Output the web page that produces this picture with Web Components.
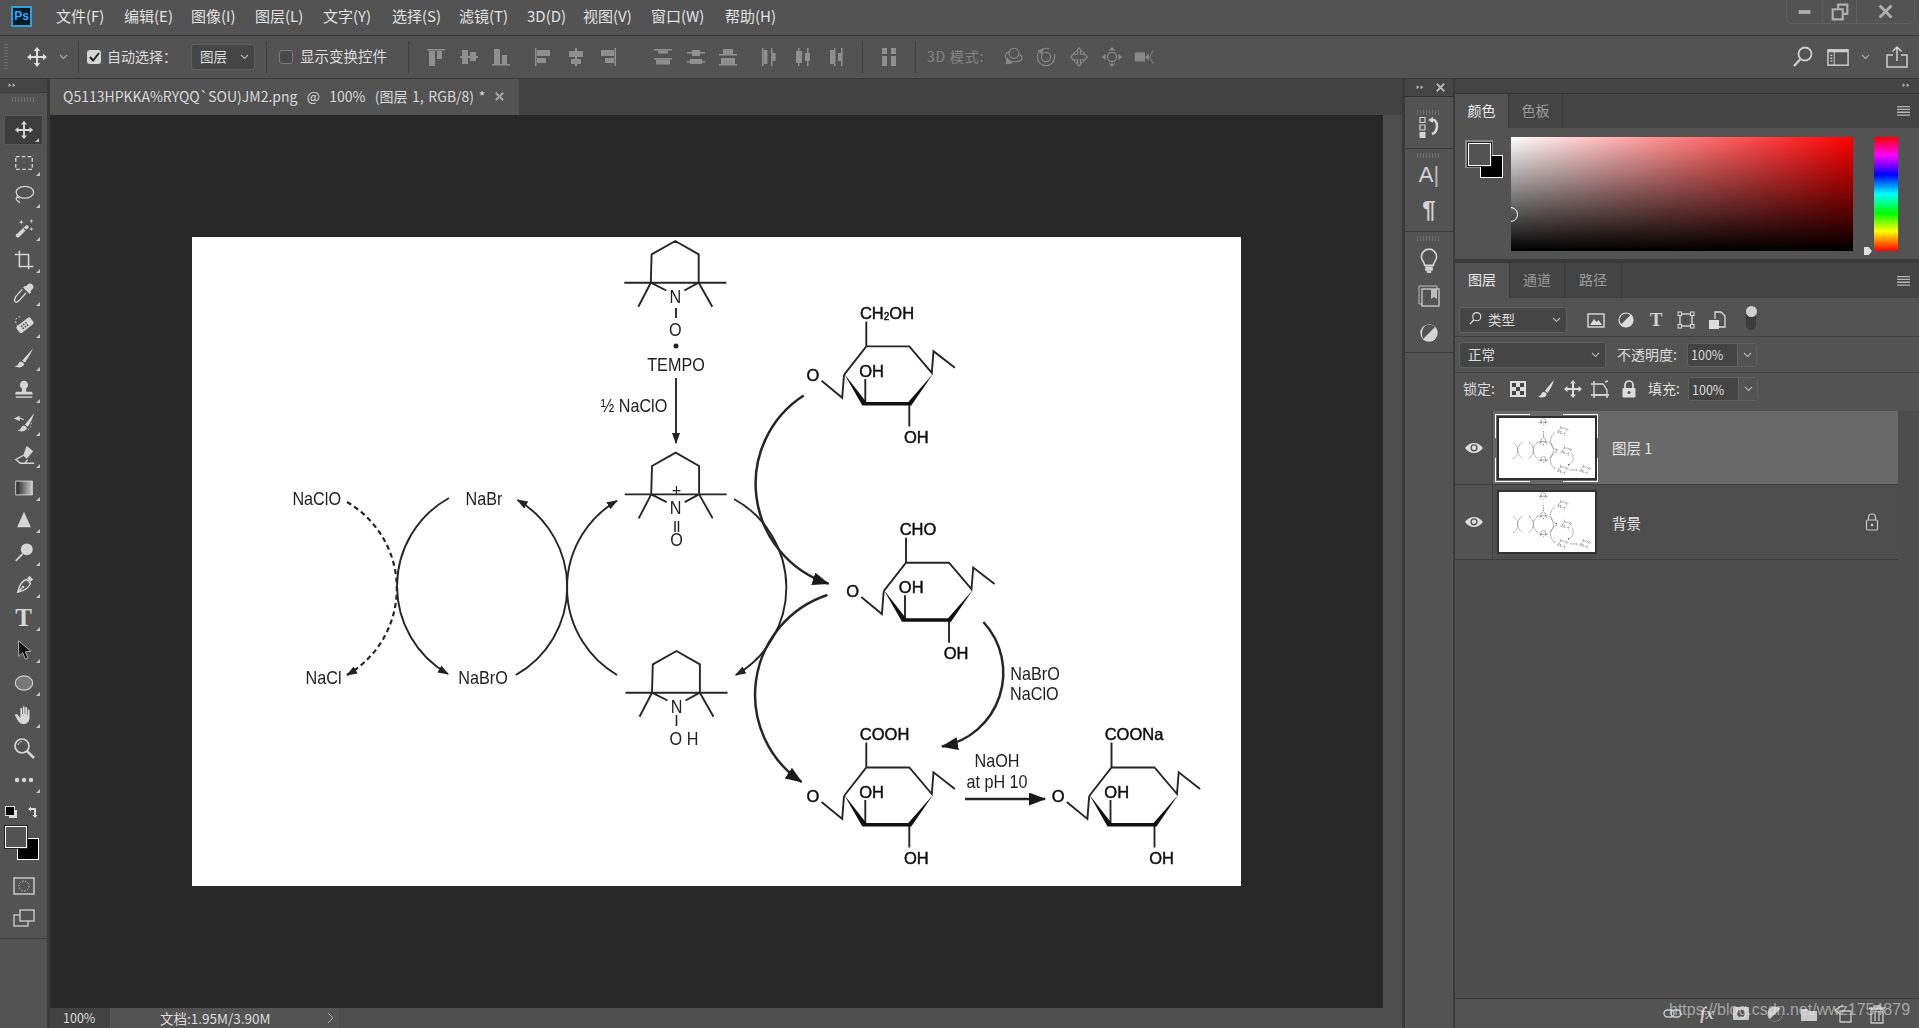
<!DOCTYPE html>
<html lang="zh"><head><meta charset="utf-8"><title>Photoshop</title>
<style>html,body{margin:0;padding:0;background:#535353;overflow:hidden}</style></head>
<body><ps-app></ps-app>
<script>
const ICONS={
move:'<path fill="currentColor" d="M12 2l3.200 4H13v5h5V8.800l4 3.200-4 3.200V13h-5v5h2.200L12 22l-3.200-4H11v-5H6v2.200L2 12l4-3.200V11h5V6H8.800z"/>',
marquee:'<rect x="3" y="5" width="18" height="14" fill="none" stroke="currentColor" stroke-width="1.500" stroke-dasharray="4 2.500"/>',
lasso:'<ellipse cx="13" cy="9" rx="9.500" ry="6.500" fill="none" stroke="currentColor" stroke-width="1.400"/><path d="M5 14c-2 1-2 3-.5 4s3 1 2.500 3M4 13l3 3" fill="none" stroke="currentColor" stroke-width="1.400"/>',
wand:'<path fill="currentColor" d="M15 8.500l2.500 2.500L6.500 22c-1 .8-2.300.3-3-.5s-.8-1.800 0-2.500z"/><path fill="#535353" d="M12.500 12l2 2-1 1-2-2z"/><path fill="currentColor" d="M9 3l.7 2 2 .7-2 .7L9 8.400l-.7-2-2-.7 2-.7zM20 2l.6 1.800 1.800.6-1.800.6-.6 1.800-.6-1.800-1.800-.6 1.800-.6zM20 11l.6 1.600 1.600.6-1.600.6-.6 1.600-.6-1.600-1.600-.6 1.600-.6z"/>',
crop:'<path fill="none" stroke="currentColor" stroke-width="1.700" d="M7 2v17h15M2 6h15v13M17 22v-2"/>',
dropper:'<path fill="currentColor" d="M17 2c2-1 4 0 5 2s0 3-1 4l-2 2 1 1-2 2-7-7 2-2 1 1z"/><path fill="none" stroke="currentColor" stroke-width="1.500" d="M10 8l-7 8c-1 2-2 3-1 5s3 1 5-1l7-8"/>',
heal:'<g transform="rotate(-38 13 13)"><rect x="4" y="8" width="19" height="9" rx="2" fill="currentColor"/><g fill="#535353"><circle cx="10" cy="11" r="1"/><circle cx="13" cy="11" r="1"/><circle cx="16" cy="11" r="1"/><circle cx="10" cy="14" r="1"/><circle cx="13" cy="14" r="1"/><circle cx="16" cy="14" r="1"/></g></g><path fill="none" stroke="currentColor" stroke-dasharray="2 2" d="M8 3C3 3 1 8 5 13"/>',
brush:'<path fill="currentColor" d="M22 1c-3 4-9 10-12 14l3 2c3-4 7-11 9-16zM9 16c-3 0-3 2-4 4l-3 1c3 2 8 2 10-2 .3-1-.5-2.300-3-3z"/>',
stamp:'<circle cx="12" cy="6.500" r="4.500" fill="currentColor"/><path fill="currentColor" d="M10 10h4l.5 4H20c1 0 1.500 1 1.500 3H2.500c0-2 .5-3 1.500-3h5.500z"/><rect x="3" y="19" width="18" height="1.500" fill="currentColor"/>',
history:'<path fill="currentColor" d="M23 1c-3 4-7 9-10 13l3 2c3-4 6-10 7-15zM12 15c-3 0-3 2-4 4l-3 1c3 2 8 2 10-2 .3-1-.5-2.300-3-3z"/><path fill="currentColor" d="M1 7l6-3 .2 2.200c2 0 3.500.5 4.800 1.800l-1 1c-1-.8-2.300-1.300-3.700-1.300L7.500 10z"/><path fill="none" stroke="currentColor" stroke-dasharray="1.500 2" d="M20 12c0 4-2 7-5 8"/>',
eraser:'<path fill="currentColor" d="M15 2l7 6-7 8-4-3.500z"/><path fill="none" stroke="currentColor" stroke-width="1.400" d="M11 12.500L3 17l5 4h5l3-4M8 21h15"/>',
gradient:'<defs><linearGradient id="g"><stop offset="0" stop-color="#222"/><stop offset="1" stop-color="#ccc"/></linearGradient></defs><rect x="3" y="4.500" width="18" height="15" fill="url(#g)" stroke="#ddd" stroke-width="1"/>',
triangle:'<path fill="currentColor" d="M12 3l7.500 17h-15z"/>',
dodge:'<circle cx="15" cy="8" r="6.500" fill="currentColor"/><path stroke="currentColor" stroke-width="2" d="M10.500 13L3 20.500"/>',
pen:'<path fill="none" stroke="currentColor" stroke-width="1.500" d="M15 6l4 4c-1 5-6 8-14 10 2-8 5-13 10-14zM5 20l5-5"/><circle cx="11" cy="14" r="1.300" fill="currentColor"/><path fill="currentColor" d="M15.500 5l2.500-3 4 4-3 2.500z"/>',
arrow:'<path fill="#111" stroke="#bbb" d="M6 2l.3 17 4.200-4 3 7 3-1.300-3-6.700 6-.6z"/>',
ellipse:'<ellipse cx="12" cy="12" rx="9.500" ry="7.800" fill="#777" stroke="#ccc" stroke-width="1.300"/>',
hand:'<path fill="currentColor" d="M8 5.500c0-1.500 2-1.500 2 0V11h.7V3.500c0-1.500 2-1.500 2 0V11h.7V4.500c0-1.500 2-1.500 2 0V12h.6V7c0-1.500 2-1.500 2 0v8c0 4-2.500 7-6.500 7-3.500 0-5-2-6.500-4.500L2.500 13c-1-1.500.8-3 2-1.700L8 15z"/>',
zoom:'<circle cx="10" cy="10" r="7" fill="none" stroke="currentColor" stroke-width="1.700"/><path stroke="currentColor" stroke-width="2.500" d="M15 15l7 7"/><path fill="none" stroke="currentColor" d="M6 9c.5-2 2-3.500 4-3.500"/>',
dots:'<g fill="currentColor"><circle cx="5" cy="12" r="2.200"/><circle cx="12" cy="12" r="2.200"/><circle cx="19" cy="12" r="2.200"/></g>',
quickmask:'<rect x="2" y="4" width="20" height="16" fill="none" stroke="currentColor" stroke-width="1.500"/><circle cx="12" cy="12" r="5" fill="none" stroke="currentColor" stroke-dasharray="1.500 1.500"/>',
screen:'<rect x="2" y="9" width="14" height="11" fill="#535353" stroke="currentColor" stroke-width="1.400"/><rect x="8" y="4" width="14" height="11" fill="#535353" stroke="currentColor" stroke-width="1.400"/>',
search:'<circle cx="14" cy="9" r="6.500" fill="none" stroke="currentColor" stroke-width="1.800"/><path stroke="currentColor" stroke-width="2.200" d="M9.500 14L3 21"/>',
workspace:'<rect x="1" y="4" width="21" height="16" fill="none" stroke="currentColor" stroke-width="1.500"/><rect x="1" y="4" width="21" height="2.500" fill="currentColor"/><path fill="currentColor" d="M3.500 9h2v1.500h-2zM3.500 12h2v1.500h-2zM3.500 15h2v1.500h-2z"/><path stroke="currentColor" d="M7.500 6v14"/>',
share:'<path fill="none" stroke="currentColor" stroke-width="1.500" d="M8 10H2v12h20V10h-6M12 16V2M7.500 6.500L12 2l4.500 4.500"/>',
min:'<rect x="5" y="10" width="13" height="4" fill="currentColor"/>',
restore:'<path fill="none" stroke="currentColor" stroke-width="2.300" d="M10 8V4h10v10h-4M4 9h11v11H4z"/>',
close:'<path stroke="currentColor" stroke-width="3" d="M5 5l13 13M18 5L5 18"/>',
fold:'<path fill="currentColor" d="M1 2l4 3-4 3zM7 2l4 3-4 3z"/>',
x:'<path stroke="currentColor" stroke-width="2.400" d="M1 1l10 10M11 1L1 11"/>',
menu:'<path fill="currentColor" d="M0 0h13v1.300H0zM0 2.800h13v1.300H0zM0 5.600h13v1.300H0zM0 8.400h13v1.300H0z"/>',
chev:'<path fill="none" stroke="currentColor" stroke-width="1.100" d="M1 1l3.500 3.500L8 1"/>',
histpanel:'<path fill="none" stroke="currentColor" stroke-width="1.200" d="M3 2.500h5v5H3zM3 10h5v5H3z"/><rect x="2.500" y="17" width="6" height="6" fill="currentColor"/><path fill="none" stroke="currentColor" stroke-width="2.600" d="M14 5c4-1 6 2 6 6s-2 7-5 8"/><path fill="currentColor" d="M11 5l5-3v6z"/>',
bulb:'<path fill="none" stroke="currentColor" stroke-width="1.500" d="M8 16c0-3-3-4-3-8a7 7 0 0 1 14 0c0 4-3 5-3 8z"/><rect x="8.500" y="17" width="7" height="4" fill="currentColor"/><rect x="10" y="21" width="4" height="2" fill="currentColor"/>',
libraries:'<rect x="5" y="5" width="17" height="17" fill="none" stroke="currentColor" stroke-width="1.500"/><path fill="none" stroke="currentColor" d="M5 20H2V2h18v3"/><path fill="currentColor" d="M14 5h6v10l-3-2-3 2z"/>',
half:'<circle cx="12" cy="12" r="9.500" fill="currentColor"/><path fill="#535353" d="M5.500 18.500L18.500 5.500c-3-3-8-3.500-11-1s-4 9-2 14z"/>',
f_image:'<rect x="2" y="4" width="16" height="13" fill="none" stroke="currentColor" stroke-width="1.400"/><path fill="currentColor" d="M4 15l4-6 2.500 3 2-2 3.500 5z"/>',
f_adjust:'<circle cx="10" cy="10" r="7" fill="none" stroke="currentColor" stroke-width="1.200"/><path fill="currentColor" d="M4.500 15L15 4.500A7 7 0 0 1 4.500 15z"/>',
f_shape:'<rect x="4" y="4" width="12" height="12" fill="none" stroke="currentColor" stroke-width="1.300"/><g fill="#535353" stroke="currentColor"><rect x="2" y="2" width="3.500" height="3.500"/><rect x="14.500" y="2" width="3.500" height="3.500"/><rect x="2" y="14.500" width="3.500" height="3.500"/><rect x="14.500" y="14.500" width="3.500" height="3.500"/></g>',
f_smart:'<path fill="none" stroke="currentColor" stroke-width="1.300" d="M8 9V2h6l4 4v11h-6"/><rect x="2" y="10" width="10" height="9" fill="currentColor"/>',
checker:'<path fill="#ddd" d="M2 2h16v16H2z"/><path fill="#444" d="M4 4h4v4H4zM12 4h4v4h-4zM8 8h4v4H8zM4 12h4v4H4zM12 12h4v4h-4z"/>',
l_brush:'<path fill="currentColor" d="M18 1c-3 3-7 8-9 11l2.500 2c2.500-3 5-8 6.500-13zM8 13c-2.500 0-2.500 2-3 3l-3 1.500c3 1.500 7 1.500 8.500-1.500.3-1-.3-2.500-2.500-3z"/>',
l_move:'<path fill="currentColor" d="M10 1l3 3.500h-2V9h4.500V7l3.500 3-3.500 3v-2H11v4.500h2L10 19l-3-3.500h2V11H4.500v2L1 10l3.500-3v2H9V4.500H7z"/>',
l_art:'<path fill="none" stroke="currentColor" stroke-width="1.300" d="M4 5h9l4 6v5H4z"/><path stroke="currentColor" stroke-width="1.500" d="M1 5h3M15 3l3-1M1 16h18M4 2v2M4 17v2M17 17v2"/>',
l_lock:'<path fill="none" stroke="currentColor" stroke-width="1.700" d="M6 9V6a4 4 0 0 1 8 0v3"/><rect x="3.500" y="9" width="13" height="9.500" rx="1" fill="currentColor"/><circle cx="10" cy="13.500" r="1.500" fill="#535353"/>',
lock_o:'<path fill="none" stroke="currentColor" stroke-width="1.200" d="M6.500 8V5.500a3.500 3.500 0 0 1 7 0V8"/><rect x="4.500" y="8" width="11" height="10" rx="1" fill="none" stroke="currentColor" stroke-width="1.200"/><circle cx="10" cy="13" r="1.300" fill="currentColor"/>',
eye:'<path fill="currentColor" d="M1 10c2.500-3.500 5.500-5 9-5s6.500 1.500 9 5c-2.500 3.500-5.500 5-9 5s-6.500-1.500-9-5z"/><circle cx="10" cy="9.800" r="3.600" fill="#535353"/><circle cx="10" cy="9.800" r="2.200" fill="currentColor"/>',
b_link:'<g fill="none" stroke="currentColor" stroke-width="1.400"><rect x="1" y="6" width="10" height="7" rx="3.500"/><rect x="8" y="6" width="10" height="7" rx="3.500"/></g>',
b_mask:'<rect x="2" y="3" width="16" height="13" rx="1" fill="currentColor"/><circle cx="10" cy="9.500" r="3.800" fill="#535353"/>',
b_adj:'<circle cx="10" cy="10" r="7.500" fill="currentColor"/><path fill="#535353" d="M4.700 15.300L15.300 4.700A7.500 7.500 0 0 1 4.700 15.300z"/>',
b_folder:'<path fill="currentColor" d="M2 5h6l2 2h8v10H2z"/>',
b_new:'<path fill="none" stroke="currentColor" stroke-width="1.300" d="M7 7h11v11H7zM7 10L2 6l8-5"/>',
b_trash:'<path fill="none" stroke="currentColor" stroke-width="1.300" d="M4 5h12v14H4zM2 4h16M7 4V2h6v2M8 7v10M12 7v10"/>',
orbit:'<circle cx="13" cy="8" r="5.500" fill="none" stroke="currentColor" stroke-width="1.200"/><path fill="none" stroke="currentColor" stroke-width="1.200" d="M8 6c-5 2-6 6-2 9 4 3 12 3 15 0 2-3 0-5-3-6"/><path fill="currentColor" d="M5 12l7 7-8 1z"/>',
roll:'<circle cx="12" cy="12" r="9.500" fill="none" stroke="currentColor" stroke-width="1.200" stroke-dasharray="48 8"/><circle cx="12" cy="12" r="5" fill="none" stroke="currentColor" stroke-width="1.200"/><path fill="currentColor" d="M3 5l7-2-3 6z"/>',
pan:'<path fill="none" stroke="currentColor" stroke-width="1.300" d="M12 2l3 3.500h-1.500V9H17V7.500l4 4.500-4 4.500V15h-3.500v3.500H15L12 22l-3-3.500h1.500V15H7v1.500L3 12l4-4.500V9h3.500V5.500H9z"/>',
slide:'<circle cx="12" cy="12" r="5" fill="none" stroke="currentColor" stroke-width="1.300"/><path fill="currentColor" d="M12 1l3.500 4h-7zM12 23l-3.500-4h7zM1 12l4-3.500v7zM23 12l-4 3.500v-7z"/>',
camera:'<rect x="1" y="7" width="11" height="10" rx="1" fill="currentColor"/><path fill="currentColor" d="M12 12l4-4v8z"/><path fill="none" stroke="currentColor" d="M21 5l-4 7 4 7"/>'
};
const R=(x,y,w,h)=>`<rect x="${x}" y="${y}" width="${w}" height="${h}" fill="currentColor"/>`;
Object.assign(ICONS,{
a1:R(1,2,18,1.500)+R(3,4,6,15)+R(11,4,5,8),
a2:R(1,9,2,2)+R(3,3,6,14)+R(11,5,6,9)+R(9,9,2,2)+R(17,9,2,2),
a3:R(1,17,18,1.500)+R(3,2,6,15)+R(11,8,5,9),
a4:R(2,1,1.500,18)+R(4,3,13,6)+R(4,11,9,5),
a5:R(9,1,2,18)+R(3,4,14,6)+R(5,12,10,5),
a6:R(16.500,1,1.500,18)+R(3,3,13,6)+R(7,11,9,5),
d1:R(2,2,18,1.500)+R(6,3.500,10,3)+R(2,11,18,1.500)+R(4,12.500,14,5),
d2:R(2,5,18,1.500)+R(7,3,8,6)+R(2,14,18,1.500)+R(5,12,12,5),
d3:R(6,2,10,5)+R(2,7,18,1.500)+R(4,11,14,6)+R(2,17,18,1.500),
d4:R(2,1,1.500,18)+R(3.500,3,4,14)+R(11,1,1.500,18)+R(12.500,6,3,8),
d5:R(5,1,1.500,18)+R(3,4,6,12)+R(14,1,1.500,18)+R(12,6,5,8),
d6:R(5,3,4,14)+R(9,1,1.500,18)+R(13,6,3,8)+R(16,1,1.500,18),
dist:R(3,1,5,6)+R(12,1,5,6)+R(3,9,5,10)+R(12,9,5,10)
});
function define(name,render){customElements.define(name,class extends HTMLElement{
  connectedCallback(){ if(this.shadowRoot) return; this.attachShadow({mode:'open'}).innerHTML=render(this); }
});}
define('ps-icon',e=>{const n=e.getAttribute('name'),s=+(e.getAttribute('size')||24),v=e.getAttribute('vb')||'24';
 return `<style>:host{display:inline-flex;flex:none;line-height:0}svg{display:block}</style><svg width="${s}" height="${e.getAttribute('h')||s}" viewBox="0 0 ${v} ${e.getAttribute('vh')||v}">${ICONS[n]||''}</svg>`;});

define('ps-menubar',()=>{
 const items=[['文件(F)',68],['编辑(E)',67],['图像(I)',64],['图层(L)',68],['文字(Y)',69],['选择(S)',67],['滤镜(T)',68],['3D(D)',56],['视图(V)',68],['窗口(W)',74],['帮助(H)',60]];
 return `<style>:host{display:flex;height:35px;border-bottom:1px solid #3a3a3a;background:#535353;align-items:center;color:#e2e2e2;font-size:15px;flex:none}
 .logo{width:17px;height:17px;margin-left:11px;margin-right:24px;margin-top:-3px;border:2px solid #2fa0d8;background:#001b26;color:#31a8ff;font:bold 12px/17px "Liberation Sans",sans-serif;text-align:center;flex:none}
 .m{flex:none;white-space:nowrap;padding-bottom:4px}
 .win{margin-left:auto;margin-right:4px;align-self:flex-start;display:flex;height:23px;border:1px solid #606060;border-top:0;border-radius:0 0 6px 6px;color:#b0b0b0}
 .win div{display:flex;align-items:center;justify-content:center;border-left:1px solid #606060}.win div:first-child{border:0}</style>
 <div class="logo">Ps</div>${items.map(([t,w])=>`<div class="m" style="width:${w}px">${t}</div>`).join('')}
 <div class="win"><div style="width:35px"><ps-icon name="min" size="22"></ps-icon></div><div style="width:33px"><ps-icon name="restore" size="22"></ps-icon></div><div style="width:57px"><ps-icon name="close" size="22"></ps-icon></div></div>`;});

define('ps-select',e=>`<style>:host{display:flex;box-sizing:border-box;align-items:center;justify-content:space-between;background:#454545;border:1px solid #5f5f5f;border-radius:3px;padding:0 5px 0 8px;color:#dcdcdc;font-size:13.500px;flex:none}span{display:flex;align-items:center;gap:5px;padding-bottom:2px}ps-icon{color:#b5b5b5}</style><span><slot></slot></span><ps-icon name="chev" size="9" h="6" vb="9" vh="6"></ps-icon>`);
define('ps-percent',e=>`<style>:host{display:flex;box-sizing:border-box;height:24px;width:70px;background:#444;border:1px solid #5f5f5f;border-radius:3px;color:#dcdcdc;font:12.500px "Noto Sans CJK SC",sans-serif;align-items:center;flex:none}b{font-weight:400;width:49px;padding-left:3px;box-sizing:border-box}i{flex:1;height:100%;border-left:1px solid #666;background:#535353;display:flex;align-items:center;justify-content:center;border-radius:0 3px 3px 0;color:#b5b5b5}</style><b><slot></slot></b><i><ps-icon name="chev" size="9" h="6" vb="9" vh="6"></ps-icon></i>`);

define('ps-optionsbar',()=>{
 const cell=(n,w=33)=>`<div class="c" style="width:${w}px"><ps-icon name="${n}" size="20" vb="20"></ps-icon></div>`;
 const i3=(n)=>`<div class="c d3" style="width:33px"><ps-icon name="${n}" size="22"></ps-icon></div>`;
 return `<style>:host{display:flex;height:42px;background:#535353;border-bottom:1px solid #3a3a3a;align-items:center;color:#dcdcdc;font-size:14.500px;flex:none;position:relative}
 .c{display:flex;justify-content:center;flex:none;color:#8f8f8f}.d3{color:#8a8a8a}.s{width:1px;height:32px;background:#3e3e3e;flex:none}
 .grip{width:4px;height:26px;margin-left:4px;background:repeating-linear-gradient(#6a6a6a 0 1px,transparent 1px 3px);flex:none}
 .ck{width:14px;height:14px;border-radius:3px;background:#d6d6d6;flex:none;display:flex;align-items:center;justify-content:center}
 .uk{width:12px;height:12px;border-radius:3px;border:1px solid #7a7a7a;background:#4a4a4a;flex:none}
 .t{white-space:nowrap;flex:none;padding-bottom:3px}</style>
 <div class="grip"></div>
 <ps-icon name="move" style="margin-left:17px;color:#ddd"></ps-icon>
 <ps-icon name="chev" size="9" h="6" vb="9" vh="6" style="margin-left:10px;color:#a8a8a8"></ps-icon>
 <div class="s" style="margin-left:10px"></div>
 <div class="ck" style="margin-left:8px"><svg width="11" height="10" viewBox="0 0 11 10"><path d="M1 5l3 3.500L10 1" fill="none" stroke="#222" stroke-width="2"/></svg></div>
 <div class="t" style="margin-left:6px;width:84px;font-size:14px">自动选择：</div>
 <ps-select style="width:64px;height:26px">图层</ps-select>
 <div class="s" style="margin-left:11px"></div>
 <div class="uk" style="margin-left:12px"></div>
 <div class="t" style="margin-left:7px;width:108px">显示变换控件</div>
 <div class="s"></div>
 <div style="width:10px;flex:none"></div>${cell('a1')}${cell('a2')}${cell('a3',32)}
 <div style="width:9px;flex:none"></div>${cell('a4')}${cell('a5')}${cell('a6',32)}
 <div style="width:21px;flex:none"></div>${cell('d1')}${cell('d2')}${cell('d3',32)}
 <div style="width:10px;flex:none"></div>${cell('d4')}${cell('d5')}${cell('d6',32)}
 <div style="width:11px;flex:none"></div><div class="s"></div>
 <div style="width:12px;flex:none"></div>${cell('dist',27)}<div style="width:13px;flex:none"></div><div class="s"></div>
 <div class="t" style="margin-left:11px;color:#858585;width:69px;font-size:14px;letter-spacing:.8px">3D 模式:</div>
 ${i3('orbit')}${i3('roll')}${i3('pan')}${i3('slide')}${i3('camera')}
 <div style="margin-left:auto;display:flex;align-items:center;margin-right:10px;color:#cfcfcf">
 <ps-icon name="search" size="24" style="margin-right:12px"></ps-icon><ps-icon name="workspace" size="23" style="margin-right:11px"></ps-icon>
 <ps-icon name="chev" size="9" h="6" vb="9" vh="6" style="margin-right:15px;color:#a8a8a8"></ps-icon><ps-icon name="share" size="24"></ps-icon></div>`;});

define('ps-tool',e=>{const a=e.hasAttribute('active'),c=e.hasAttribute('nocorner');return `<style>:host{display:flex;height:32.500px;align-items:center;justify-content:center;position:relative;flex:none;color:#d6d6d6;box-sizing:border-box}
 .box{width:39px;height:30px;display:flex;align-items:center;justify-content:center;position:relative;box-sizing:border-box;${a?'background:#3d3d3d;border:1px solid #5a5a5a;border-radius:2px;':''}}
 .tr{position:absolute;right:3px;bottom:2px;width:0;height:0;border-left:4px solid transparent;border-bottom:4px solid #c8c8c8}</style>
 <div class="box"><slot></slot>${c?'':'<i class="tr"></i>'}</div>`;});

define('ps-toolbar',()=>{
 const names=['move','marquee','lasso','wand','crop','dropper','heal','brush','stamp','history','eraser','gradient','triangle','dodge','pen','T','arrow','ellipse','hand','zoom','dots'];
 return `<style>:host{display:flex;flex-direction:column;width:50px;box-sizing:border-box;border-right:3px solid #3a3a3a;background:#535353;flex:none}
 .h{height:14px;background:#454545;border-bottom:1px solid #383838;color:#b0b0b0;padding:3px 0 0 8px;box-sizing:border-box;line-height:0;flex:none}
 .grip{height:5px;margin:4px auto 12px;width:24px;flex:none;background:repeating-linear-gradient(90deg,#6f6f6f 0 1px,transparent 1px 3px)}
 .t{font:700 25px/24px "Liberation Serif",serif;color:#d6d6d6;height:24px}
 .sw{height:60px;position:relative;flex:none;margin-top:8px}
 .sw>*{position:absolute}
 .fg{left:5px;top:21px;width:20px;height:20px;background:#535353;border:1px solid #fff;outline:1px solid #222;z-index:1}
 .bg{left:17px;top:33px;width:20px;height:20px;background:#000;border:1px solid #fff}
 .end{margin-top:auto;height:92px;border-top:1px solid #3d3d3d;flex:none}
 .mini{left:5px;top:1px;width:8px;height:8px;background:#000;border:1px solid #ddd}.mini2{left:9px;top:5px;width:8px;height:8px;background:#ddd}
 .sp{left:27px;top:1px;color:#ddd}
 .q{display:flex;justify-content:center;color:#c8c8c8;height:32px;align-items:center;flex:none}</style>
 <div class="h"><ps-icon name="fold" size="8" vb="12"></ps-icon></div><div class="grip"></div>
 ${names.map((n,i)=>`<ps-tool ${i==0?'active':''} ${n=='zoom'?'nocorner':''}>${n=='T'?'<span class="t">T</span>':`<ps-icon name="${n}" size="${n=='zoom'||n=='dots'?24:22}"></ps-icon>`}</ps-tool>`).join('')}
 <div class="sw"><i class="mini2"></i><i class="mini"></i>
  <svg class="sp" width="12" height="13" viewBox="0 0 12 13"><path d="M1 3l3-2.500V2h5v7h1.500L8 12 5.500 9H7V4H4v1.500z" fill="#ddd"/></svg>
  <i class="bg"></i><i class="fg"></i></div>
 <div class="q" style="margin-top:5px"><ps-icon name="quickmask" size="24"></ps-icon></div>
 <div class="q"><ps-icon name="screen" size="24"></ps-icon></div>
 <div class="end" style="margin-top:4px"></div>`;});

function diagram(mini){
 const L=(x1,y1,x2,y2,w=1.600)=>`<line x1="${x1}" y1="${y1}" x2="${x2}" y2="${y2}" stroke-width="${w}"/>`;
 const T=(x,y,s,b)=>mini?'':(b?`<text x="${x}" y="${y}" class="b">${s}</text>`:`<text transform="translate(${x} ${y}) scale(.9 1)">${s}</text>`);
 const ring=(x,y,lab)=>`<g transform="translate(${x} ${y})"><path class="p" d="M-24.500 41.700L-23.700 13.300 0 0 23.400 13.300 23.400 41.700M-24.500 41.700L-9 49.500M23.400 41.700L9 49.500M-51 41.700H51M-24.500 41.700L-37 65.700M23.400 41.700L37 65.700"/>${T(0,56,'N')}</g>`;
 const sugar=(x,y,top,tx)=>`<g transform="translate(${x} ${y})"><path class="p" d="M-22.300 28.500L0 0H43L65.500 26.500L67.200 4.800L88.600 21.400M-22.300 28.500L-24.100 51.400L-44.700 34.400M0 0V-25M-1 32.500V57M43 57V80"/>
 <path class="w" d="M-22.300 27L-4 59H45L67 27 42 55.500H0z"/>${T(-53.300,28.600,'O',1)}${T(5.200,24.600,'OH',1)}${T(50,90.200,'OH',1)}${T(tx,-33.400,top,1)}</g>`;
 return `<defs><marker id="a" markerUnits="userSpaceOnUse" markerWidth="11" markerHeight="8" refX="10" refY="4" orient="auto"><path d="M0 0L11 4 0 8z" fill="#222" stroke="none"/></marker>
 <marker id="A" markerUnits="userSpaceOnUse" markerWidth="17" markerHeight="13" refX="16" refY="6.500" orient="auto"><path d="M0 0L17 6.500 0 13z" fill="#1a1a1a" stroke="none"/></marker></defs>
 ${ring(675.300,241)}${ring(675.700,452.700)}${ring(676.500,651)}
 <path class="p" d="M676 308V318"/>
 <path class="p" d="M676 378V443" marker-end="url(#a)"/>
 ${L(675,521,675,532,1.500)}${L(678.500,521,678.500,532,1.500)}${L(676.500,715,676.500,726,1.600)}
 <circle cx="676" cy="346" r="2.500" fill="#222"/>
 ${T(675.300,330,'O')}${T(676,365,'TEMPO')}${T(634,406,'½ NaClO')}${T(676.500,491,'+')}${T(676.500,540.700,'O')}${T(684,739,'O H')}
 ${T(316.700,499.300,'NaClO')}${T(484,499.300,'NaBr')}${T(323.600,678.300,'NaCl')}${T(483,678.300,'NaBrO')}
 <path class="p" stroke-dasharray="5 3.500" style="stroke-width:${mini?7:2.200}px" d="M347 502A100 100 0 0 1 347 675" marker-end="url(#a)"/>
 <path class="p" d="M449 498A101 101 0 0 0 448 674" marker-end="url(#a)"/>
 <path class="p" d="M515.700 675A101 101 0 0 0 517.600 500" marker-end="url(#a)"/>
 <path class="p" d="M617 675A101 101 0 0 1 617 500.700" marker-end="url(#a)"/>
 <path class="p" d="M734 499A101 101 0 0 1 735.800 675" marker-end="url(#a)"/>
 <path class="p k" d="M803.700 395.500A105 105 0 0 0 828.500 583.700" marker-end="url(#A)"/>
 <path class="p k" d="M827.400 595A105 105 0 0 0 801.600 782" marker-end="url(#A)"/>
 <path class="p k" d="M983.400 622A75 75 0 0 1 942 746.600" marker-end="url(#A)"/>
 <path class="p k" d="M965 799H1045" marker-end="url(#A)"/>
 ${sugar(866.300,346.400,'CH<tspan dy="3" font-size="10">2</tspan><tspan dy="-3">OH</tspan>',20.700)}
 ${sugar(906,562.700,'CHO',12)}${sugar(866.300,767.500,'COOH',18.300)}${sugar(1111.500,767.500,'COONa',22.500)}
 ${T(1035,673.800,'NaBrO')}${T(1034.400,694.400,'NaClO')}${T(997,761.600,'NaOH')}${T(997,782,'at pH 10')}`;
}
define('ps-diagram',e=>{const m=e.hasAttribute('mini');return `<style>:host{display:block;background:#fff;line-height:0}
 svg{display:block;width:100%;height:100%;${m?'':'filter:blur(.6px);'}}
 .p,line{fill:none;stroke:${m?'#6e6e6e':'#262626'};${m?'stroke-dasharray:10 6;':''}}
 .p{stroke-width:${m?9:1.900}px}
 .k{stroke-width:${m?9:2.500}px}
 line{${m?'stroke-width:8px':''}}
 .w{fill:${m?'#666':'#111'}}
 text{font:18px "Liberation Sans",sans-serif;fill:#222;text-anchor:middle;dominant-baseline:central}
 text.b{font-size:16.500px;fill:#0d0d0d;stroke:#0d0d0d;stroke-width:.45}</style>
 <svg viewBox="192 237 1049 649" preserveAspectRatio="none">${diagram(m)}</svg>`;});

define('ps-tab',e=>`<style>:host{display:flex;align-items:center;justify-content:center;flex:none;box-sizing:border-box;height:100%;padding-bottom:3px;border-right:1px solid #383838;font-size:14px;color:${e.hasAttribute('active')?'#ececec':'#9c9c9c'};background:${e.hasAttribute('active')?'#535353':'transparent'}}</style><slot></slot>`);
define('ps-panel-tabs',e=>`<style>:host{display:flex;background:#444;height:${e.getAttribute('h')||34}px;flex:none;position:relative;align-items:stretch}ps-icon{position:absolute;right:9px;top:50%;margin-top:-5px;color:#b5b5b5}</style><slot></slot><ps-icon name="menu" size="13" h="10" vb="13" vh="10"></ps-icon>`);

define('ps-layer',e=>{const a=e.hasAttribute('active'),lk=e.hasAttribute('locked');
 return `<style>:host{display:flex;height:${a?74:75}px;box-sizing:border-box;border-bottom:1px solid #3d3d3d;width:443px;flex:none;color:#e6e6e6;font-size:14.500px;align-items:center;background:#4e4e4e}
 .eye{width:37px;display:flex;justify-content:center;flex:none;color:#ddd;height:100%;align-items:center;border-right:1px solid #444;background:#535353}
 .main{flex:1;height:100%;display:flex;align-items:center;position:relative;${a?'background:#696969;':''}}
 .th{width:100px;height:64px;margin-left:4px;border:2px solid ${a?'#2e2e2e':'#333'};box-sizing:border-box;flex:none;background:#fff}
 ps-diagram{width:100%;height:100%}
 .n{margin-left:15px;white-space:nowrap}
 .c{position:absolute;width:34px;height:23px;border:solid #fff;border-width:0}
 .lk{position:absolute;right:16px;top:50%;margin-top:-10px;color:#c8c8c8}</style>
 <div class="eye"><ps-icon name="eye" size="20" vb="20"></ps-icon></div>
 <div class="main"><div class="th"><ps-diagram mini></ps-diagram></div><div class="n"><slot></slot></div>
 ${a?`<i class="c" style="left:2px;top:3px;border-width:1.500px 0 0 1.500px"></i><i class="c" style="left:70px;top:3px;border-width:1.500px 1.500px 0 0"></i><i class="c" style="left:2px;bottom:2px;border-width:0 0 1.500px 1.500px"></i><i class="c" style="left:70px;bottom:2px;border-width:0 1.500px 1.500px 0"></i>`:''}
 ${lk?'<ps-icon class="lk" name="lock_o" size="20" vb="20"></ps-icon>':''}</div>`;});

define('ps-panels',()=>{
 const gi=(n,ml)=>`<ps-icon name="${n}" size="20" vb="20" style="margin-left:${ml}px"></ps-icon>`;
 return `<style>:host{display:flex;flex-direction:column;width:464px;flex:none;background:#535353;color:#dcdcdc;font-size:14px;min-height:0}
 .strip{height:14px;background:#444;border-bottom:1px solid #333;flex:none;display:flex;justify-content:flex-end;align-items:center;padding-right:9px;color:#b0b0b0;box-sizing:content-box}
 .color{height:131px;display:flex;flex:none;padding-top:9px;box-sizing:border-box;position:relative}
 .sw{width:56px;position:relative;flex:none}.sw i{position:absolute;box-sizing:border-box}
 .grad{width:342px;height:114px;flex:none;position:relative;background:linear-gradient(to bottom,transparent,#000),linear-gradient(to right,#fff,#f00)}
 .grad b{position:absolute;left:-8px;top:70px;width:15px;height:15px;border:1px solid #fff;border-radius:50%;box-sizing:border-box;clip-path:inset(0 0 0 8px)}
 .hue{width:24px;height:114px;margin-left:21px;flex:none;position:relative;background:linear-gradient(#f00 0,#f0f 16%,#00f 33%,#0ff 50%,#0f0 67%,#ff0 83%,#f00 100%)}
 .hue u{position:absolute;left:-10px;bottom:-4px;width:8px;height:8px;background:#ddd;clip-path:polygon(0 0,60% 0,100% 50%,60% 100%,0 100%)}
 .sep{height:4px;background:#3a3a3a;flex:none}
 .row{display:flex;align-items:center;flex:none;box-sizing:border-box;border-bottom:1px solid #3f3f3f;color:#dcdcdc}
 .lbl{white-space:nowrap;flex:none;padding-bottom:2px}
 .list{flex:1;display:flex;flex-direction:column;background:#4d4d4d;min-height:0}
 .foot{height:30px;border-top:1px solid #3a3a3a;flex:none;display:flex;align-items:center;box-sizing:border-box;color:#c8c8c8;position:relative}
 .fx{font:italic 700 16px "Liberation Serif",serif;width:34px;text-align:center;color:#c8c8c8;flex:none}
 .foot ps-icon{width:34px;justify-content:center}
 .toggle{width:10px;height:20px;border-radius:5px;background:#3c3c3c;position:relative;margin-left:19px;flex:none}
 .toggle i{position:absolute;left:-0.500px;top:-4px;width:11px;height:11px;border-radius:50%;background:#d0d0d0}
 </style>
 <div class="strip"><ps-icon name="fold" size="8" vb="12"></ps-icon></div>
 <ps-panel-tabs><ps-tab active style="width:54px">颜色</ps-tab><ps-tab style="width:54px">色板</ps-tab></ps-panel-tabs>
 <div class="color">
  <div class="sw"><i style="left:10px;top:3px;width:28px;height:28px;background:#8a8a8a"></i>
   <i style="left:25px;top:18px;width:23px;height:23px;background:#000;border:1px solid #fff"></i>
   <i style="left:13px;top:6px;width:23px;height:23px;background:#535353;border:1px solid #fff;outline:1px solid #222"></i></div>
  <div class="grad"><b></b></div><div class="hue"><u></u></div>
 </div>
 <div class="sep"></div>
 <ps-panel-tabs h="35"><ps-tab active style="width:55px">图层</ps-tab><ps-tab style="width:55px">通道</ps-tab><ps-tab style="width:57px">路径</ps-tab></ps-panel-tabs>
 <div class="row" style="height:39px;padding:5px 0 0 4px">
  <ps-select style="width:108px;height:26px"><ps-icon name="search" size="15"></ps-icon>类型</ps-select>
  ${gi('f_image',19)}${gi('f_adjust',10)}<span style="font:700 19px/20px 'Liberation Serif',serif;width:20px;text-align:center;margin-left:10px;color:#d0d0d0">T</span>${gi('f_shape',10)}${gi('f_smart',11)}
  <div class="toggle"><i></i></div>
 </div>
 <div class="row" style="height:36px;padding-left:4px">
  <ps-select style="width:147px;height:26px">正常</ps-select>
  <div class="lbl" style="margin-left:11px;width:70px">不透明度:</div><ps-percent>100%</ps-percent>
 </div>
 <div class="row" style="height:38px;padding:0 0 6px 8px;border:0">
  <div class="lbl" style="width:45px">锁定:</div>${gi('checker',0)}${gi('l_brush',8)}${gi('l_move',7)}${gi('l_art',7)}${gi('l_lock',9)}
  <div class="lbl" style="margin-left:9px;width:40px">填充:</div><ps-percent>100%</ps-percent>
 </div>
 <div class="list"><ps-layer active>图层 1</ps-layer><ps-layer locked>背景</ps-layer></div>
 <div class="foot"><div style="width:201px;flex:none"></div><ps-icon name="b_link" size="20" vb="20"></ps-icon><div class="fx">fx</div><ps-icon name="b_mask" size="20" vb="20"></ps-icon><ps-icon name="b_adj" size="20" vb="20"></ps-icon><ps-icon name="b_folder" size="20" vb="20"></ps-icon><ps-icon name="b_new" size="20" vb="20"></ps-icon><ps-icon name="b_trash" size="20" vb="20"></ps-icon></div>`;});

define('ps-dock',()=>`<style>:host{display:flex;flex-direction:column;width:53px;box-sizing:border-box;border-left:3px solid #3a3a3a;border-right:2px solid #3a3a3a;background:#535353;color:#d4d4d4;flex:none}
 .h{height:18px;background:#454545;border-bottom:1px solid #333;display:flex;align-items:center;justify-content:space-between;padding:0 8px 0 11px;flex:none;box-sizing:border-box;color:#b8b8b8}
 .g{border-bottom:1px solid #3c3c3c;display:flex;flex-direction:column;align-items:center;flex:none;box-sizing:border-box;position:relative}
 .g::before{content:"";width:24px;height:5px;margin-top:4px;background:repeating-linear-gradient(90deg,#6f6f6f 0 1px,transparent 1px 3px);flex:none}
 .a{font:22px/22px "Liberation Sans",sans-serif;color:#d4d4d4}.a span{font-weight:200;color:#bbb}
 .pi{font:700 24px/24px "Liberation Sans",sans-serif;color:#d4d4d4}</style>
 <div class="h"><ps-icon name="fold" size="8" vb="12"></ps-icon><ps-icon name="x" size="9" vb="12"></ps-icon></div>
 <div class="g" style="height:52px;padding-top:9px"><ps-icon name="histpanel" size="24"></ps-icon></div>
 <div class="g" style="height:83px"><div class="a" style="margin-top:6px">A<span>|</span></div><div class="pi" style="margin-top:12px">¶</div></div>
 <div class="g" style="height:121px"><ps-icon name="bulb" size="26" style="margin-top:7px"></ps-icon><ps-icon name="libraries" size="24" style="margin-top:10px;color:#bdbdbd"></ps-icon><ps-icon name="half" size="22" style="margin-top:14px"></ps-icon></div>`);

define('ps-center',()=>`<style>:host{display:flex;flex-direction:column;flex:1;min-width:0;background:#4e4e4e}
 .tabs{height:36px;background:#434343;display:flex;flex:none}
 .tab{width:469px;background:#535353;display:flex;align-items:center;padding:0 0 2px 13px;box-sizing:border-box;font-size:14px;word-spacing:1.500px;color:#dadada;white-space:pre;flex:none}
 .tab ps-icon{margin-left:10px;color:#a8a8a8}
 .mid{flex:1;display:flex;min-height:0}
 .canvas{flex:1;background:#282828;display:flex;align-items:center;justify-content:center;min-width:0}
 ps-diagram{width:1049px;height:649px;flex:none}
 .sb{width:19px;background:#4e4e4e;flex:none}
 .st{height:20px;display:flex;flex:none;font-size:13.500px;color:#dcdcdc;background:#4e4e4e}
 .st div{display:flex;align-items:center;box-sizing:border-box;flex:none;padding-bottom:1px}</style>
 <div class="tabs"><div class="tab">Q5113HPKKA%RYQQ\`SOU)JM2.png  @  100%  (图层 1, RGB/8) *<ps-icon name="x" size="9" vb="12"></ps-icon></div></div>
 <div class="mid"><div class="canvas"><ps-diagram></ps-diagram></div><div class="sb"></div></div>
 <div class="st"><div style="width:60px;background:#424242;padding-left:13px;font-size:12.500px">100%</div>
  <div style="width:212px;background:#535353;padding-left:50px">文档:1.95M/3.90M</div>
  <div style="width:17px;background:#535353;color:#aaa;justify-content:center"><svg width="7" height="12" viewBox="0 0 7 12"><path d="M1 1l5 5-5 5" fill="none" stroke="currentColor"/></svg></div></div>`);

define('ps-app',()=>`<style>:host{display:flex;flex-direction:column;width:1919px;height:1028px;overflow:hidden;position:relative;font-family:"Noto Sans CJK SC","Noto Sans",sans-serif;background:#535353}
 .work{flex:1;display:flex;min-height:0}
 .wm{position:absolute;left:1669px;top:1000px;font:16px/20px "Liberation Sans",sans-serif;color:rgba(235,235,235,.55);white-space:nowrap;z-index:5}</style>
 <ps-menubar></ps-menubar><ps-optionsbar></ps-optionsbar>
 <div class="work"><ps-toolbar></ps-toolbar><ps-center></ps-center><ps-dock></ps-dock><ps-panels></ps-panels></div>
 <div class="wm">https://blog.csdn.net/wwz1754879</div>`);
</script></body></html>
